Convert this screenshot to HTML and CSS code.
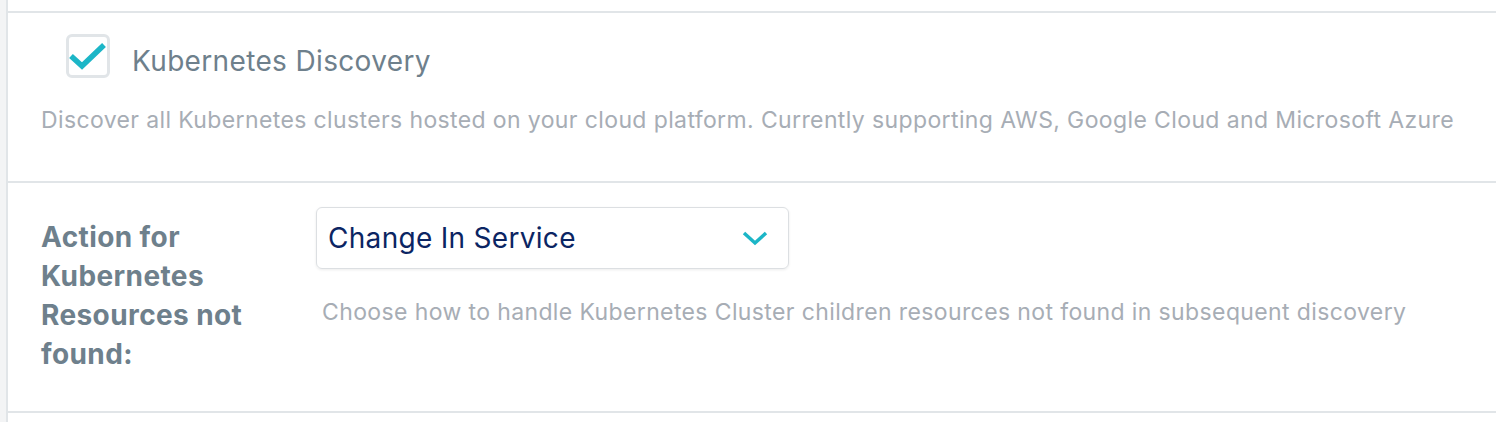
FILE: index.html
```html
<!DOCTYPE html>
<html lang="en">
<head>
  <meta charset="UTF-8" />
  <title>Discovery Settings</title>
  <link rel="stylesheet" href="styles.css">
</head>
<body>
  <div class="settings-panel">

    <!-- Kubernetes discovery toggle -->
    <div class="setting-row discovery-row">
      <label class="check-line">
        <span class="check-box">
          <svg width="38" height="38" viewBox="0 0 38 38">
            <polyline points="2,20 13,30 35,9" fill="none" stroke="#1cb6c7" stroke-width="5.5"/>
          </svg>
        </span>
        <span class="check-label">Kubernetes Discovery</span>
      </label>
      <p class="setting-help">Discover all Kubernetes clusters hosted on your cloud platform. Currently supporting AWS, Google Cloud and Microsoft Azure</p>
    </div>

    <!-- Action for missing resources -->
    <div class="setting-row action-row">
      <div class="field-label">Action for Kubernetes Resources not found:</div>
      <div class="field-body">
        <div class="select-box">
          <span class="select-value">Change In Service</span>
          <svg class="select-arrow" width="26" height="16" viewBox="0 0 26 16">
            <polyline points="2,3 13,13 24,3" fill="none" stroke="#1cb6c7" stroke-width="3.5"/>
          </svg>
        </div>
        <p class="setting-help field-help">Choose how to handle Kubernetes Cluster children resources not found in subsequent discovery</p>
      </div>
    </div>

  </div>
</body>
</html>
```

FILE: styles.css
```css
* {
  margin: 0;
  padding: 0;
  box-sizing: border-box;
}

body {
  font-family: 'Inter', 'Noto Sans', sans-serif;
  background: #f3f4f5;
  height: 100vh;
  padding-left: 6px;
}

.settings-panel {
  background: #ffffff;
  border-left: 2px solid #e1e5e8;
  min-height: 100%;
  padding-top: 11px;
}

.setting-row {
  border-top: 2px solid #e1e5e8;
  padding-left: 33px;
}

.setting-row:last-child {
  border-bottom: 2px solid #e1e5e8;
}

.discovery-row {
  height: 170px;
  padding-top: 21px;
}

.check-line {
  display: flex;
  align-items: center;
  margin-left: 25px;
}

.check-box {
  width: 44px;
  height: 44px;
  border: 3px solid #e1e5e8;
  border-radius: 6px;
  display: flex;
  align-items: center;
  justify-content: center;
}

.check-box svg {
  display: block;
  margin-top: -2px;
}

.check-label {
  margin-left: 22px;
  margin-top: 10px;
  font-size: 28px;
  color: #6e808c;
  letter-spacing: 0.35px;
}

.setting-help {
  font-size: 23px;
  color: #a7adb5;
  letter-spacing: 0.38px;
}

.discovery-row .setting-help {
  margin-top: 28px;
}

.action-row {
  display: flex;
  height: 232px;
}

.field-label {
  width: 250px;
  padding-top: 35px;
  font-size: 28px;
  line-height: 39px;
  font-weight: 700;
  color: #6e808c;
  letter-spacing: 0.4px;
}

.field-body {
  margin-left: 25px;
  padding-top: 24px;
}

.select-box {
  width: 473px;
  height: 62px;
  border: 1px solid #dcdfe2;
  border-radius: 6px;
  box-shadow: 0 1px 3px rgba(0, 0, 0, 0.08);
  display: flex;
  align-items: center;
  justify-content: space-between;
  padding: 0 20px 0 11px;
}

.select-value {
  font-size: 28px;
  color: #0b2563;
  letter-spacing: 0.3px;
}

.field-help {
  margin-top: 29px;
  margin-left: 6px;
}
```
